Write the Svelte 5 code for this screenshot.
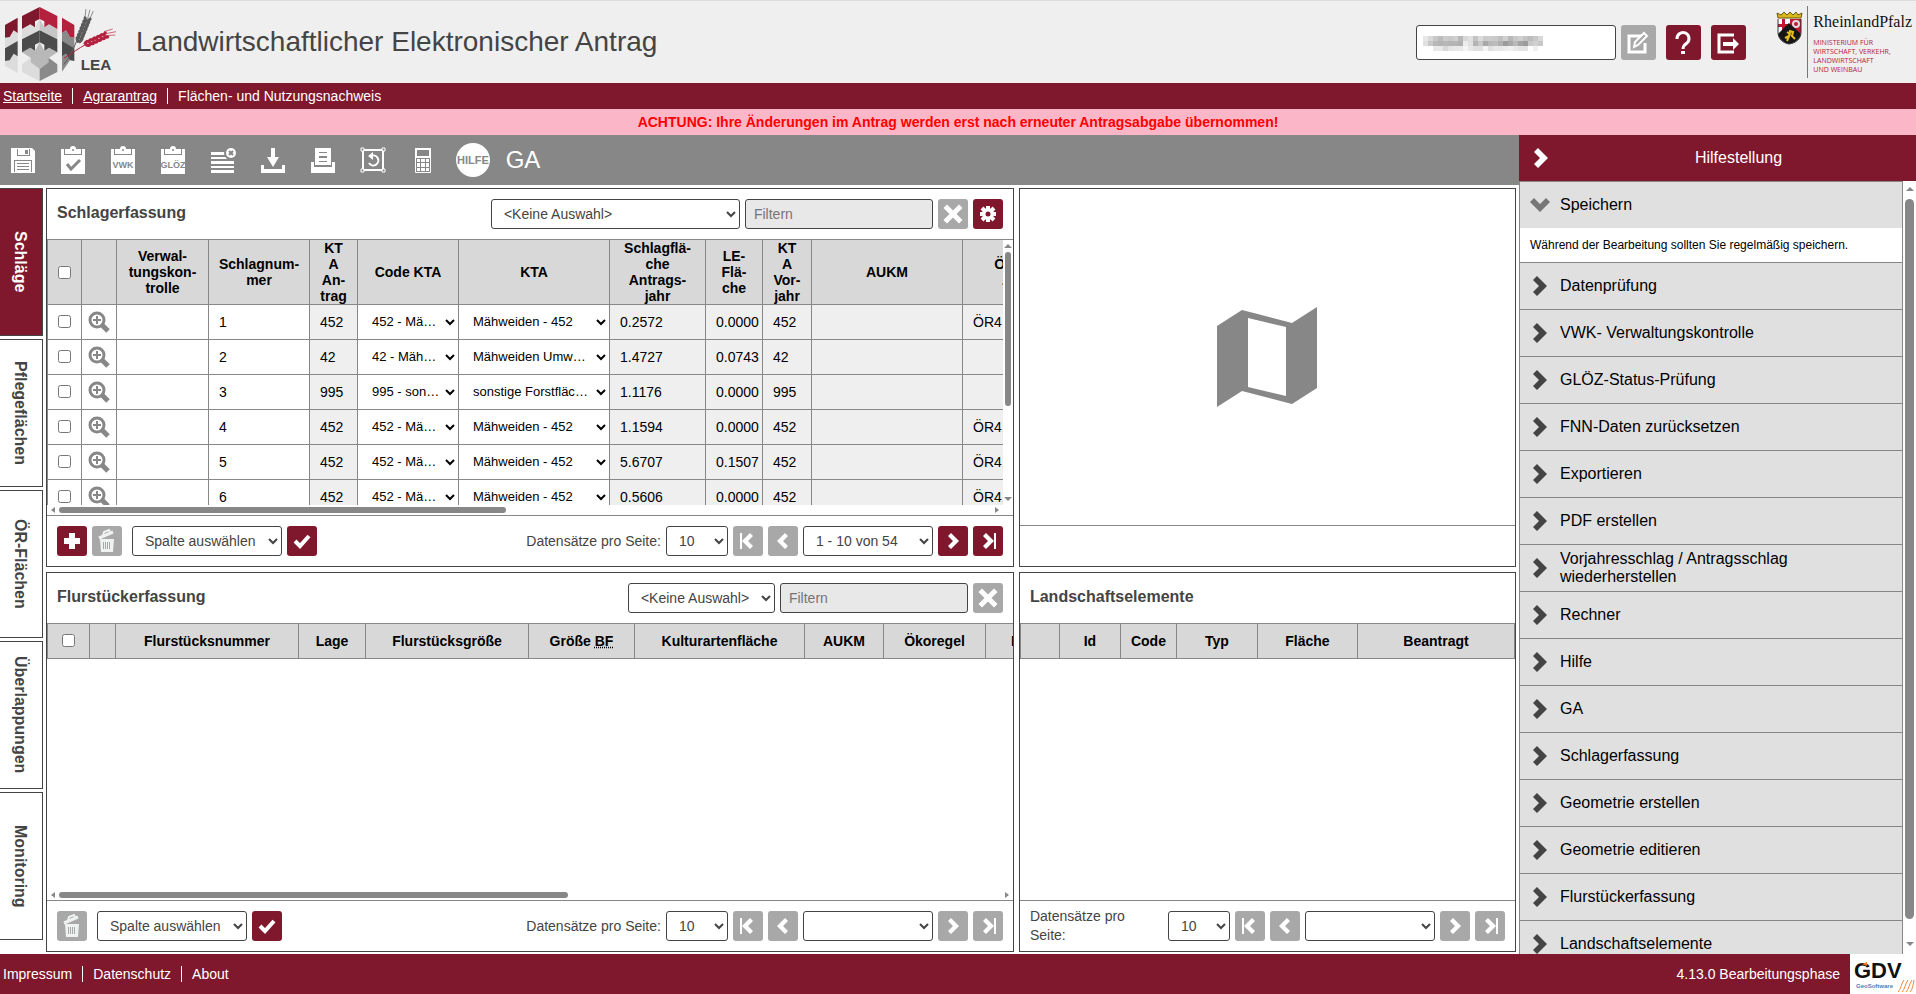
<script>
  const tools = [
    { icon: 'save', title: 'Speichern' },
    { icon: 'clip-check', title: 'Datenprüfung' },
    { icon: 'clip-vwk', title: 'VWK' },
    { icon: 'clip-gloez', title: 'GLÖZ' },
    { icon: 'reset', title: 'FNN-Daten zurücksetzen' },
    { icon: 'download', title: 'Exportieren' },
    { icon: 'print', title: 'PDF erstellen' },
    { icon: 'restore', title: 'Wiederherstellen' },
    { icon: 'calc', title: 'Rechner' },
  ];

  const tabs = ['Schläge', 'Pflegeflächen', 'ÖR-Flächen', 'Überlappungen', 'Monitoring'];
  let activeTab = $state('Schläge');

  const schlagCols = [
    { label: '', width: 34, check: true },
    { label: '', width: 35 },
    { label: 'Verwal-\ntungskon-\ntrolle', width: 92 },
    { label: 'Schlagnum-\nmer', width: 101 },
    { label: 'KT\nA\nAn-\ntrag', width: 48 },
    { label: 'Code KTA', width: 101 },
    { label: 'KTA', width: 151 },
    { label: 'Schlagflä-\nche\nAntrags-\njahr', width: 96 },
    { label: 'LE-\nFlä-\nche', width: 57 },
    { label: 'KT\nA\nVor-\njahr', width: 49 },
    { label: 'AUKM', width: 151 },
    { label: 'Ökoregel\nAntrag', width: 124 },
  ];
  const schlagWidth = schlagCols.reduce((sum, c) => sum + c.width, 1);

  const schlaege = [
    { nr: 1, kta: '452', code: '452 - Mähweiden', name: 'Mähweiden - 452', area: '0.2572', le: '0.0000', oer: 'ÖR4' },
    { nr: 2, kta: '42', code: '42 - Mähweiden Umwandlung', name: 'Mähweiden Umwandlung - 42', area: '1.4727', le: '0.0743', oer: '' },
    { nr: 3, kta: '995', code: '995 - sonstige Forstflächen', name: 'sonstige Forstflächen - 995', area: '1.1176', le: '0.0000', oer: '' },
    { nr: 4, kta: '452', code: '452 - Mähweiden', name: 'Mähweiden - 452', area: '1.1594', le: '0.0000', oer: 'ÖR4,' },
    { nr: 5, kta: '452', code: '452 - Mähweiden', name: 'Mähweiden - 452', area: '5.6707', le: '0.1507', oer: 'ÖR4,' },
    { nr: 6, kta: '452', code: '452 - Mähweiden', name: 'Mähweiden - 452', area: '0.5606', le: '0.0000', oer: 'ÖR4,' },
  ];

  const flurCols = [
    { label: '', width: 42, check: true },
    { label: '', width: 26 },
    { label: 'Flurstücksnummer', width: 183 },
    { label: 'Lage', width: 67 },
    { label: 'Flurstücksgröße', width: 163 },
    { label: 'Größe', abbr: 'BF', width: 106 },
    { label: 'Kulturartenfläche', width: 170 },
    { label: 'AUKM', width: 79 },
    { label: 'Ökoregel', width: 102 },
    { label: 'Bindung', width: 108 },
  ];
  const flurWidth = flurCols.reduce((sum, c) => sum + c.width, 1);

  const leCols = [
    { label: '', width: 39 },
    { label: 'Id', width: 61 },
    { label: 'Code', width: 56 },
    { label: 'Typ', width: 81 },
    { label: 'Fläche', width: 100 },
    { label: 'Beantragt', width: 157 },
  ];

  const helpTopics = [
    'Datenprüfung',
    'VWK- Verwaltungskontrolle',
    'GLÖZ-Status-Prüfung',
    'FNN-Daten zurücksetzen',
    'Exportieren',
    'PDF erstellen',
    'Vorjahresschlag / Antragsschlag wiederherstellen',
    'Rechner',
    'Hilfe',
    'GA',
    'Schlagerfassung',
    'Geometrie erstellen',
    'Geometrie editieren',
    'Flurstückerfassung',
    'Landschaftselemente',
  ];

  // grey values of the masked user number, 5px blocks
  const mask = [
    'e8d8c8bcccc8d0b8d8e0c4dccccccac0d0b8c8d0c4bcc8d8',
    'e0c8b8b4b8b4b4b0ece0b4c8a8b8bcb09ca8b8a49cc8d0c8',
    'ffffe8e8d8e4e8e8f4e8e0e0f4e0e8e8ecf0e8e4e4fff0ff',
  ].map((row) => row.match(/../g));
</script>

{#snippet icon(name)}
  {#if name === 'save'}
    <svg width="26" height="28" viewBox="0 0 26 28" aria-hidden="true">
      <path fill="#fff" d="M1 2h21l3 3v22H1z" />
      <path fill="#878787" d="M7 3h13v7H7zM4 14h18v12H4z" />
      <path fill="#fff" d="M8 3h11v6H8zM5 15h16v11H5z" />
      <path fill="#878787" d="M15 4h3v4h-3zM7 17h12v1H7zM7 20h12v1H7zM7 23h12v1H7z" />
    </svg>
  {:else if name.startsWith('clip')}
    <svg width="26" height="28" viewBox="0 0 26 28" aria-hidden="true">
      <path fill="#fff" d="M1 3h24v25H1z" />
      <path fill="#878787" d="M4 3h18v6H4z" />
      <path fill="#fff" d="M5 3h5a3 3 0 0 1 6 0h5v5H5z" />
      <circle cx="13" cy="4" r="1" fill="#878787" />
      {#if name === 'clip-check'}
        <path d="M7 18l4 5 9-9" fill="none" stroke="#878787" stroke-width="3" />
      {:else}
        <text x="13" y="22" text-anchor="middle" font-size="9" font-weight="bold" fill="#878787">
          {name === 'clip-vwk' ? 'VWK' : 'GLÖZ'}
        </text>
      {/if}
    </svg>
  {:else if name === 'reset'}
    <svg width="26" height="28" viewBox="0 0 26 28" aria-hidden="true">
      <path fill="#fff" d="M1 6h15v3H1zM1 11h16v2H1zM1 15h23v3H1zM1 20h23v2H1zM1 24h23v3H1z" />
      <circle cx="21" cy="7" r="7" fill="#878787" />
      <circle cx="21" cy="7" r="5" fill="#fff" />
      <path d="M19 5l4 4M23 5l-4 4" stroke="#878787" stroke-width="2" />
    </svg>
  {:else if name === 'download'}
    <svg width="26" height="28" viewBox="0 0 26 28" aria-hidden="true">
      <path fill="#fff" d="M11 2h4v9h4l-6 10-6-10h4zM1 19h3v4h18v-4h3v8H1z" />
    </svg>
  {:else if name === 'print'}
    <svg width="26" height="28" viewBox="0 0 26 28" aria-hidden="true">
      <path fill="#fff" d="M5 2h16v17H5zM1 16h3v5h18v-5h3v11H1z" />
      <path fill="#878787" d="M9 6h8v1H9zM9 10h8v2H9zM9 15h8v1H9z" />
    </svg>
  {:else if name === 'restore'}
    <svg width="26" height="28" viewBox="0 0 26 28" aria-hidden="true">
      <path fill="none" stroke="#fff" stroke-width="2" d="M3 4h20v20H3z" />
      <path fill="#878787" stroke="#fff" d="M1 2h3v3H1zM22 2h3v3h-3zM1 23h3v3H1zM22 23h3v3h-3z" />
      <path fill="none" stroke="#fff" stroke-width="2" d="M9 17a5 5 0 1 0 2-7" />
      <path fill="#fff" d="M8 10l5-4v8z" />
    </svg>
  {:else if name === 'calc'}
    <svg width="26" height="28" viewBox="0 0 26 28" aria-hidden="true">
      <path fill="none" stroke="#fff" d="M5.500 2.500h15v24h-15z" />
      <path fill="none" stroke="#fff" stroke-width="2" d="M6 3h14v8H6z" />
      <path
        fill="#fff"
        d="M7 13h3v3H7zM11 13h4v3h-4zM16 13h3v3h-3zM7 17h3v4H7zM11 17h4v4h-4zM16 17h3v4h-3zM7 22h3v3H7zM11 22h4v3h-4zM16 22h3v3h-3z"
      />
    </svg>
  {:else if name === 'zoom'}
    <svg width="22" height="22" viewBox="0 0 22 22" aria-hidden="true">
      <path d="M13 13l7 7" stroke="#878787" stroke-width="5" />
      <circle cx="9" cy="9" r="7" fill="#fff" stroke="#878787" stroke-width="3" />
      <path d="M9 5v8M5 9h8" stroke="#878787" stroke-width="2" />
    </svg>
  {:else if name === 'plus'}
    <svg width="30" height="30" viewBox="0 0 30 30" aria-hidden="true">
      <path fill="#fff" d="M12 7h6v5h5v6h-5v5h-6v-5H7v-6h5z" />
    </svg>
  {:else if name === 'trash'}
    <svg width="30" height="30" viewBox="0 0 30 30" aria-hidden="true">
      <path fill="#eef2f1" d="M8 13h14l-1 13H9z" />
      <path fill="#a8a8a8" d="M11 16h1v7h-1zM13 16h1v7h-1zM15 16h1v7h-1zM17 16h1v7h-1z" />
      <path d="M7 12l14-6" stroke="#eef2f1" stroke-width="3" />
      <path d="M11 9l1-3 5-2 1 2" fill="none" stroke="#eef2f1" stroke-width="2" />
    </svg>
  {:else if name === 'check'}
    <svg width="30" height="30" viewBox="0 0 30 30" aria-hidden="true">
      <path d="M8 15l5 5 9-10" fill="none" stroke="#fff" stroke-width="4" />
    </svg>
  {:else if name === 'cross'}
    <svg width="30" height="30" viewBox="0 0 30 30" aria-hidden="true">
      <path d="M9 9l12 12M21 9L9 21" stroke="#fff" stroke-width="5" stroke-linecap="square" />
    </svg>
  {:else if name === 'gear'}
    <svg width="30" height="30" viewBox="0 0 30 30" aria-hidden="true">
      <path d="M15 7v16M7 15h16M9 9l12 12M21 9L9 21" stroke="#fff" stroke-width="4" />
      <circle cx="15" cy="15" r="6" fill="#fff" />
      <circle cx="15" cy="15" r="2.5" fill="#80182d" />
    </svg>
  {:else if name === 'first'}
    <svg width="30" height="30" viewBox="0 0 30 30" aria-hidden="true">
      <path fill="#fff" d="M7 7h2v16H7zM20 10l-3-3-8 8 8 8 3-3-5-5z" />
    </svg>
  {:else if name === 'prev'}
    <svg width="30" height="30" viewBox="0 0 30 30" aria-hidden="true">
      <path fill="#fff" d="M20 10l-3-3-8 8 8 8 3-3-5-5z" />
    </svg>
  {:else if name === 'next'}
    <svg width="30" height="30" viewBox="0 0 30 30" aria-hidden="true">
      <path fill="#fff" d="M10 10l3-3 8 8-8 8-3-3 5-5z" />
    </svg>
  {:else if name === 'last'}
    <svg width="30" height="30" viewBox="0 0 30 30" aria-hidden="true">
      <path fill="#fff" d="M21 7h2v16h-2zM10 10l3-3 8 8-8 8-3-3 5-5z" />
    </svg>
  {:else if name === 'edit'}
    <svg width="35" height="35" viewBox="0 0 35 35" aria-hidden="true">
      <path d="M20 11H8v16h16v-9" fill="none" stroke="#fff" stroke-width="3" />
      <path d="M13 22l1-5L23 8l3 3-9 9z" fill="#a8a8a8" stroke="#fff" stroke-width="2" />
    </svg>
  {:else if name === 'help'}
    <svg width="35" height="35" viewBox="0 0 35 35" aria-hidden="true">
      <path d="M11 14a6 6 0 1 1 10 4c-3 2-4 3-4 6" fill="none" stroke="#fff" stroke-width="3" />
      <path fill="#fff" d="M15 26h4v3h-4z" />
    </svg>
  {:else if name === 'logout'}
    <svg width="35" height="35" viewBox="0 0 35 35" aria-hidden="true">
      <path d="M23 10H8v17h15" fill="none" stroke="#fff" stroke-width="3" />
      <path fill="#fff" d="M12 17h10v-4l6 6-6 6v-4H12z" />
    </svg>
  {:else if name === 'chevron'}
    <svg width="14" height="20" viewBox="0 0 14 20" aria-hidden="true">
      <path fill="currentColor" d="M0 4l4-4 10 10L4 20l-4-4 6-6z" />
    </svg>
  {:else if name === 'chevron-down'}
    <svg width="20" height="14" viewBox="0 0 20 14" aria-hidden="true">
      <path fill="currentColor" d="M4 0L0 4l10 10L20 4l-4-4-6 6z" />
    </svg>
  {/if}
{/snippet}

{#snippet iconButton(name, title, active)}
  <button class="icon-btn" class:icon-btn--active={active} {title} aria-label={title}>
    {@render icon(name)}
  </button>
{/snippet}

{#snippet hbar(size)}
  <div class="bar bar--h" aria-hidden="true">
    <svg width="4" height="6" viewBox="0 0 4 6"><path d="M4 0v6L0 3z" /></svg>
    <div class="track"><div class="thumb" style="width: {size}%"></div></div>
    <svg width="4" height="6" viewBox="0 0 4 6"><path d="M0 0v6l4-3z" /></svg>
  </div>
{/snippet}

{#snippet vbar(size)}
  <div class="bar bar--v" aria-hidden="true">
    <svg width="8" height="4" viewBox="0 0 8 4"><path d="M0 4h8L4 0z" /></svg>
    <div class="track"><div class="thumb" style="height: {size}%"></div></div>
    <svg width="8" height="4" viewBox="0 0 8 4"><path d="M0 0h8L4 4z" /></svg>
  </div>
{/snippet}

{#snippet pager(id, range, active)}
  <label class="pager-label" for="{id}-size">Datensätze pro Seite:</label>
  <select class="field size-select" id="{id}-size">
    <option>10</option>
    <option>25</option>
  </select>
  {@render iconButton('first', 'Erste Seite', false)}
  {@render iconButton('prev', 'Vorherige Seite', false)}
  <select class="field range-select" aria-label="Seite">
    <option>{range}</option>
  </select>
  {@render iconButton('next', 'Nächste Seite', active)}
  {@render iconButton('last', 'Letzte Seite', active)}
{/snippet}

{#snippet headCells(cols)}
  <tr>
    {#each cols as col}
      <th>
        {#if col.check}
          <input type="checkbox" aria-label="Alle auswählen" />
        {:else}
          {col.label}{#if col.abbr}{' '}<abbr title="Bruttofläche">{col.abbr}</abbr>{/if}
        {/if}
      </th>
    {/each}
  </tr>
{/snippet}

<!-- one storey of the logo cube: two side wings and the roof in the middle -->
{#snippet storey(left, right)}
  <path fill={left} d="M15 72l38-22v46l-12-8-12 20-14 2zM66 45l53-27v36l-14 7v18l-14-9-25 14z" />
  <path fill={right} d="M223 72l-37-22v46l12-8 12 20 13 2zM172 45l-53-27v36l14 7v18l14-9 25 14z" />
{/snippet}

<div class="app">
  <header class="header">
    <svg class="logo" width="118" height="82" viewBox="0 0 354 246" aria-label="LEA">
      <path fill="#dcdcdc" d="M15 110l14-2 12-20 12 8v26l-38 20zM66 84l25-14 14 9 14-25v34l-53 27z" />
      <path fill="#c6c6c6" d="M172 84l-25-14-14 9-14-25v34l53 27z" />
      <path fill="#8a8a8a" d="M223 110l-13-2-12-20-12 8v26l37 20z" />
      <path fill="#dcdcdc" d="M15 180l14-2 12-20 12 8v49l-38-20zM66 190l26-20v14l27 20v36l-53-27z" />
      <path fill="#b8b8b8" d="M66 154l25-14 14 9 14-25 14 25 14-9 25 14-25 16v14l-28 20-27-20v-14z" />
      <path fill="#8a8a8a" d="M172 190l-26-20v14l-27 20v36l53-27zM186 166l12-8 12 20-24 34z" />
      {@render storey('#80182d', '#b4213f')}
      <g transform="translate(0 70)">{@render storey('#4b4b4b', '#4b4b4b')}</g>
      <g fill="none" stroke="#5a5a5a" stroke-width="3">
        <path d="M192 190c16-20 30-50 42-80" />
        <path stroke="#b4213f" d="M192 172c24-16 44-30 66-42" />
      </g>
      <g fill="#5a5a5a">
        {#each [0, 1, 2, 3, 4, 5, 6] as i}
          <ellipse cx={232 + i * 4} cy={116 - i * 10} rx="5" ry="10" transform="rotate(-8 {232 + i * 4} {116 - i * 10})" />
          <ellipse cx={243 + i * 4} cy={118 - i * 10} rx="5" ry="10" transform="rotate(38 {243 + i * 4} {118 - i * 10})" />
        {/each}
      </g>
      <path d="M254 56l4-32M262 56l8-30M266 62l14-32" stroke="#5a5a5a" stroke-width="2" />
      <g fill="#b4213f">
        {#each [0, 1, 2, 3, 4, 5] as i}
          <ellipse cx={258 + i * 11} cy={124 - i * 5} rx="9" ry="5" transform="rotate(-50 {258 + i * 11} {124 - i * 5})" />
          <ellipse cx={264 + i * 11} cy={133 - i * 5} rx="9" ry="5" transform="rotate(5 {264 + i * 11} {133 - i * 5})" />
        {/each}
      </g>
      <path d="M318 98l30-6M318 104l28-2M312 92l26-8" stroke="#b4213f" stroke-width="2" />
      <text x="242" y="207" font-size="46" font-weight="bold" fill="#444">LEA</text>
    </svg>
    <h1>Landwirtschaftlicher Elektronischer Antrag</h1>
    <div class="user">
      <input type="text" aria-label="Unternehmensnummer" />
      <svg class="mask" width="120" height="15" viewBox="0 0 120 15" aria-hidden="true">
        {#each mask as row, y}
          {#each row as tone, x}
            <rect x={x * 5} y={y * 5} width="5" height="5" fill="#{tone}{tone}{tone}" />
          {/each}
        {/each}
      </svg>
      <button class="icon-btn icon-btn--big" aria-label="Bearbeiten">{@render icon('edit')}</button>
    </div>
    <button class="icon-btn icon-btn--big icon-btn--active" aria-label="Hilfe">{@render icon('help')}</button>
    <button class="icon-btn icon-btn--big icon-btn--active" aria-label="Abmelden">{@render icon('logout')}</button>
    <div class="ministry">
      <svg width="27" height="34" viewBox="0 0 27 34" aria-hidden="true">
        <path fill="#d8b71a" stroke="#6b5a10" d="M2 7L1 2l4 2 3-3 3 3 3-3 3 3 3-3 2 3 4-2-1 5z" />
        <path fill="#fff" d="M2 8h12v14H2z" />
        <path fill="#c01733" d="M6 8h3v14H6zM2 13h12v3H2zM14 8h11v14H14z" />
        <circle cx="20" cy="13" r="3" fill="none" stroke="#ddd" stroke-width="2" />
        <path fill="#161616" d="M13 12l12 11c-1 5-6 9-12 10C8 32 3 28 2 23z" />
        <path d="M9 27l4-2 1-5 3 1-1 4 3 3M11 21l3 2-3 7" fill="none" stroke="#e2bd20" stroke-width="2" />
        <path d="M2 8v13c0 7 5 11 11 12 7-1 12-5 12-12V8" fill="none" stroke="#333" />
      </svg>
      <div class="ministry-text">
        <div class="land">RheinlandPfalz</div>
        <div class="dept">MINISTERIUM FÜR<br />WIRTSCHAFT, VERKEHR,<br />LANDWIRTSCHAFT<br />UND WEINBAU</div>
      </div>
    </div>
  </header>

  <nav class="crumbs">
    <a href="#start">Startseite</a>
    <a href="#antrag">Agrarantrag</a>
    <span>Flächen- und Nutzungsnachweis</span>
  </nav>

  <div class="warning">ACHTUNG: Ihre Änderungen im Antrag werden erst nach erneuter Antragsabgabe übernommen!</div>

  <div class="body">
    <div class="work">
      <div class="toolbar">
        {#each tools as tool}
          <button title={tool.title} aria-label={tool.title}>{@render icon(tool.icon)}</button>
        {/each}
        <button title="Hilfe"><span class="hilfe">HILFE</span></button>
        <button class="ga">GA</button>
      </div>

      <div class="content">
        <div class="tabs" role="tablist">
          {#each tabs as tab}
            <button
              role="tab"
              class="tab"
              class:tab--active={tab === activeTab}
              aria-selected={tab === activeTab}
              onclick={() => (activeTab = tab)}
            >
              {tab}
            </button>
          {/each}
        </div>

        <div class="panels">
          <section class="panel">
            <div class="panel-head">
              <h2>Schlagerfassung</h2>
              <select class="field preset-wide" aria-label="Filtervorlage">
                <option>&lt;Keine Auswahl&gt;</option>
              </select>
              <input class="field filter" type="text" placeholder="Filtern" aria-label="Schläge filtern" />
              {@render iconButton('cross', 'Filter löschen', false)}
              {@render iconButton('gear', 'Einstellungen', true)}
            </div>
            <div class="grid-area">
              <div class="scroll">
                <table style="width: {schlagWidth}px">
                  <colgroup>
                    {#each schlagCols as col}<col style="width: {col.width}px" />{/each}
                  </colgroup>
                  <thead class="tall">{@render headCells(schlagCols)}</thead>
                  <tbody>
                    {#each schlaege as s}
                      <tr>
                        <td class="center"><input type="checkbox" aria-label="Schlag {s.nr} auswählen" /></td>
                        <td class="center">
                          <button class="zoom-btn" aria-label="Zu Schlag {s.nr} zoomen">{@render icon('zoom')}</button>
                        </td>
                        <td></td>
                        <td>{s.nr}</td>
                        <td class="ro">{s.kta}</td>
                        <td class="edit"><select aria-label="Code KTA"><option>{s.code}</option></select></td>
                        <td class="edit edit--name"><select aria-label="KTA"><option>{s.name}</option></select></td>
                        <td class="ro">{s.area}</td>
                        <td class="ro">{s.le}</td>
                        <td class="ro">{s.kta}</td>
                        <td class="ro"></td>
                        <td class="ro">{s.oer}</td>
                      </tr>
                    {/each}
                  </tbody>
                </table>
              </div>
              {@render vbar(64)}
            </div>
            <div class="bar-row bar-row--inset">{@render hbar(48)}</div>
            <div class="panel-foot">
              {@render iconButton('plus', 'Schlag anlegen', true)}
              {@render iconButton('trash', 'Schlag löschen', false)}
              <select class="field column-select" aria-label="Spalte">
                <option>Spalte auswählen</option>
              </select>
              {@render iconButton('check', 'Übernehmen', true)}
              <span class="spacer"></span>
              {@render pager('schlag', '1 - 10 von 54', true)}
            </div>
          </section>

          <section class="panel">
            <div class="map">
              <svg width="100" height="100" viewBox="0 0 100 100" role="img" aria-label="Karte">
                <path
                  fill="#878787"
                  fill-rule="evenodd"
                  d="M0 19L25 3l50 13L100 0v81L75 97 25 84 0 100zM31 11v69l38 9V20z"
                />
              </svg>
            </div>
            <div class="map-foot"></div>
          </section>

          <section class="panel">
            <div class="panel-head">
              <h2>Flurstückerfassung</h2>
              <select class="field preset" aria-label="Filtervorlage">
                <option>&lt;Keine Auswahl&gt;</option>
              </select>
              <input class="field filter" type="text" placeholder="Filtern" aria-label="Flurstücke filtern" />
              {@render iconButton('cross', 'Filter löschen', false)}
            </div>
            <div class="grid-area">
              <div class="scroll">
                <table style="width: {flurWidth}px">
                  <colgroup>
                    {#each flurCols as col}<col style="width: {col.width}px" />{/each}
                  </colgroup>
                  <thead>{@render headCells(flurCols)}</thead>
                </table>
              </div>
            </div>
            <div class="bar-row">{@render hbar(54)}</div>
            <div class="panel-foot">
              {@render iconButton('trash', 'Flurstück löschen', false)}
              <select class="field column-select" aria-label="Spalte">
                <option>Spalte auswählen</option>
              </select>
              {@render iconButton('check', 'Übernehmen', true)}
              <span class="spacer"></span>
              {@render pager('flur', '', false)}
            </div>
          </section>

          <section class="panel">
            <div class="panel-head">
              <h2>Landschaftselemente</h2>
            </div>
            <div class="grid-area">
              <div class="scroll">
                <table class="fluid">
                  <colgroup>
                    {#each leCols as col}<col style="width: {(col.width / 494) * 100}%" />{/each}
                  </colgroup>
                  <thead>{@render headCells(leCols)}</thead>
                </table>
              </div>
            </div>
            <div class="panel-foot panel-foot--narrow">
              {@render pager('le', '', false)}
            </div>
          </section>
        </div>
      </div>
    </div>

    <aside class="help">
      <button class="help-head">
        <span class="help-icon">{@render icon('chevron')}</span>
        <span class="help-title">Hilfestellung</span>
      </button>
      <div class="help-body">
        <div class="help-list">
          <button class="topic topic--open">
            <span class="help-icon">{@render icon('chevron-down')}</span>
            Speichern
          </button>
          <p>Während der Bearbeitung sollten Sie regelmäßig speichern.</p>
          {#each helpTopics as topic}
            <button class="topic">
              <span class="help-icon">{@render icon('chevron')}</span>
              {topic}
            </button>
          {/each}
        </div>
        {@render vbar(98)}
      </div>
    </aside>
  </div>

  <footer class="footer">
    <a href="#impressum">Impressum</a>
    <a href="#datenschutz">Datenschutz</a>
    <a href="#about">About</a>
    <span class="version">4.13.0 Bearbeitungsphase</span>
    <svg class="gdv" width="66" height="40" viewBox="0 0 66 40" aria-label="GDV GeoSoftware">
      <path fill="#fff" d="M0 0h66v40H0z" />
      <text x="4" y="24" font-size="22" font-weight="bold" fill="#111">GDV</text>
      <path fill="#e87722" d="M12 10l5-2v4z" />
      <text x="6" y="34" font-size="6" font-weight="bold" fill="#4a80b5">GeoSoftware</text>
      <path d="M48 38c3-3 3-8 6-12M52 38c3-3 3-8 6-12M56 38c3-3 3-8 6-12M60 38c3-3 3-8 4-12" fill="none" stroke="#f0883a" />
    </svg>
  </footer>
</div>

<style>
  :global(body) {
    font-family: 'Liberation Sans', Arial, sans-serif;
    font-size: 14px;
    color: #444;
    background: #fff;
  }

  * {
    box-sizing: border-box;
  }

  button,
  select,
  input {
    font-family: inherit;
    font-size: inherit;
    margin: 0;
  }

  button {
    border: 0;
    padding: 0;
    cursor: pointer;
  }

  svg {
    display: block;
    flex-shrink: 0;
  }

  .app {
    height: 100vh;
    display: flex;
    flex-direction: column;
    overflow: hidden;
  }

  /* header */
  .header {
    display: flex;
    align-items: center;
    gap: 10px;
    height: 83px;
    flex-shrink: 0;
    background: #efefef;
    border-top: 1px solid #ddd;
  }

  h1 {
    flex: 1;
    margin: 0 0 0 8px;
    font-size: 28px;
    line-height: 32px;
    font-weight: normal;
    white-space: nowrap;
  }

  .user {
    position: relative;
    display: flex;
    gap: 5px;
  }

  .user input {
    width: 200px;
    height: 35px;
    border: 1px solid #444;
    border-radius: 3px;
    background: #fff;
    padding: 0 8px;
  }

  .mask {
    position: absolute;
    left: 7px;
    top: 11px;
  }

  .ministry {
    display: flex;
    align-self: stretch;
    margin-left: 20px;
    padding: 5px 4px 5px 0;
  }

  .ministry > svg {
    margin-top: 5px;
  }

  .ministry-text {
    margin-left: 4px;
    padding-left: 5px;
    border-left: 1px solid #777;
  }

  .land {
    font-family: 'Liberation Serif', 'Times New Roman', serif;
    font-size: 16px;
    line-height: 32px;
    color: #111;
  }

  .dept {
    font-family: 'Open Sans', sans-serif;
    font-size: 7px;
    line-height: 9px;
    color: #b4213f;
  }

  .crumbs,
  .footer {
    display: flex;
    align-items: center;
    flex-shrink: 0;
    background: #80182d;
    color: #fff;
    line-height: 16px;
    padding-left: 3px;
  }

  .crumbs {
    height: 26px;
  }

  .crumbs a,
  .footer a {
    color: #fff;
  }

  .crumbs > * + *,
  .footer a + a {
    margin-left: 10px;
    padding-left: 10px;
    border-left: 1px solid #fff;
  }

  .warning {
    flex-shrink: 0;
    background: #fbb6c7;
    color: #f00;
    font-weight: bold;
    text-align: center;
    line-height: 26px;
  }

  .body {
    flex: 1;
    min-height: 0;
    display: flex;
  }

  .work {
    flex: 1;
    min-width: 0;
    display: flex;
    flex-direction: column;
  }

  .toolbar {
    display: flex;
    align-items: center;
    gap: 4px;
    height: 50px;
    flex-shrink: 0;
    background: #878787;
  }

  .toolbar button {
    display: flex;
    align-items: center;
    justify-content: center;
    width: 46px;
    height: 50px;
    background: none;
    color: #fff;
  }

  .hilfe {
    width: 34px;
    border-radius: 50%;
    background: #fff;
    color: #878787;
    font-size: 11px;
    font-weight: bold;
    line-height: 34px;
  }

  .toolbar .ga {
    font-size: 24px;
  }

  .content {
    flex: 1;
    min-height: 0;
    display: flex;
    gap: 3px;
    padding: 3px 3px 2px 0;
  }

  .tabs {
    display: flex;
    flex-direction: column;
    gap: 3px;
    width: 43px;
    margin-bottom: 12px;
  }

  .tab {
    flex: 1;
    writing-mode: vertical-rl;
    display: flex;
    align-items: center;
    justify-content: center;
    padding-right: 2px;
    border: 1px solid #444;
    border-left: 0;
    background: #fff;
    color: #444;
    font-size: 16px;
    font-weight: bold;
  }

  .tab--active {
    background: #80182d;
    color: #fff;
  }

  .panels {
    flex: 1;
    min-width: 0;
    display: grid;
    grid-template-columns: minmax(0, 37fr) minmax(0, 19fr);
    grid-template-rows: minmax(0, 379fr) minmax(0, 380fr);
    gap: 5px;
  }

  .panel {
    display: flex;
    flex-direction: column;
    min-height: 0;
    border: 1px solid #444;
    background: #fff;
  }

  .panel-head,
  .panel-foot {
    display: flex;
    align-items: center;
    gap: 5px;
    height: 50px;
    flex-shrink: 0;
    padding: 0 10px;
  }

  .panel-foot {
    height: 51px;
    border-top: 1px solid #878787;
  }

  h2 {
    flex: 1;
    margin: 0;
    padding-bottom: 2px;
    font-size: 16px;
    line-height: 20px;
  }

  .spacer {
    flex: 1;
  }

  .field {
    height: 30px;
    border: 1px solid #444;
    border-radius: 3px;
    background: #fff;
    color: #444;
    padding: 0 0 0 8px;
  }

  .filter {
    width: 188px;
    background: #e8e8e8;
  }

  .filter::placeholder {
    color: #757575;
  }

  .preset-wide { width: 249px; }
  .preset { width: 147px; }
  .column-select { width: 150px; margin-left: 5px; }
  .size-select { width: 62px; }
  .range-select { width: 130px; }

  .pager-label {
    line-height: 19px;
  }

  .panel-foot--narrow .pager-label {
    max-width: 120px;
    margin-right: auto;
  }

  .icon-btn {
    display: flex;
    align-items: center;
    justify-content: center;
    flex-shrink: 0;
    width: 30px;
    height: 30px;
    border-radius: 3px;
    background: #a8a8a8;
  }

  .icon-btn--big {
    width: 35px;
    height: 35px;
  }

  .icon-btn--active {
    background: #80182d;
  }

  .grid-area {
    flex: 1;
    min-height: 0;
    display: flex;
    border-top: 1px solid #878787;
  }

  .scroll {
    flex: 1;
    min-width: 0;
    overflow: auto;
    scrollbar-width: none;
  }

  table {
    table-layout: fixed;
    border-collapse: separate;
    border-spacing: 0;
    border-left: 1px solid #878787;
    color: #000;
  }

  .fluid {
    width: 100%;
  }

  th,
  td {
    height: 35px;
    padding: 0 0 1px;
    border-right: 1px solid #878787;
    border-bottom: 1px solid #878787;
    line-height: 16px;
    white-space: nowrap;
  }

  th {
    background: #d8d8d8;
    white-space: pre-line;
  }

  .tall :global(th) {
    height: 65px;
    padding: 0;
  }

  td {
    padding-left: 10px;
  }

  .center {
    padding: 0 0 1px;
    text-align: center;
  }

  .edit {
    padding: 0 0 1px 10px;
  }

  .ro {
    background: #efefef;
  }

  input[type='checkbox'] {
    display: block;
    width: 13px;
    height: 13px;
    margin: 0 auto;
  }

  .edit select {
    width: 100%;
    height: 30px;
    border: 0;
    padding: 0;
    background: none;
    color: #000;
    font-size: 13px;
    text-overflow: ellipsis;
  }

  .edit--name select {
    padding-right: 3px;
  }

  .zoom-btn {
    display: block;
    margin: 0 auto;
    background: none;
  }

  /* scroll bars */
  .bar {
    display: flex;
    align-items: center;
    justify-content: space-between;
    fill: #878787;
  }

  .bar--h {
    width: 100%;
    height: 10px;
    padding: 0 4px;
    gap: 4px;
  }

  .bar--v {
    flex-direction: column;
    width: 10px;
    padding: 4px 0;
    gap: 4px;
  }

  .track {
    flex: 1;
  }

  .thumb {
    border-radius: 5px;
    background: #878787;
  }

  .bar--h .thumb {
    height: 6px;
  }

  .bar--v .thumb {
    width: 6px;
  }

  .bar-row {
    flex-shrink: 0;
  }

  .bar-row--inset {
    padding-right: 10px;
  }

  .map {
    flex: 1;
    display: flex;
    align-items: center;
    justify-content: center;
  }

  .map-foot {
    height: 41px;
    border-top: 1px solid #878787;
  }

  /* help */
  .help {
    width: 397px;
    flex-shrink: 0;
    display: flex;
    flex-direction: column;
    font-size: 16px;
    line-height: 18px;
  }

  .help-head {
    display: flex;
    align-items: center;
    height: 46px;
    flex-shrink: 0;
    padding-left: 2px;
    background: #80182d;
    color: #fff;
    font-size: 16px;
  }

  .help-title {
    flex: 1;
  }

  .help-icon {
    display: flex;
    justify-content: center;
    width: 40px;
    flex-shrink: 0;
  }

  .help-body {
    flex: 1;
    min-height: 0;
    display: flex;
  }

  .help-list {
    flex: 1;
    overflow: auto;
    scrollbar-width: none;
    border: 1px solid #878787;
    border-width: 1px 1px 0 1px;
  }

  .topic {
    display: flex;
    align-items: center;
    width: 100%;
    height: 47px;
    padding-right: 10px;
    border-bottom: 1px solid #878787;
    background: #e0e0e0;
    color: #000;
    font-size: 16px;
    line-height: 18px;
    text-align: left;
  }

  .topic .help-icon {
    color: #444;
  }

  .topic--open {
    height: 46px;
    border-bottom: 0;
  }

  .topic--open .help-icon {
    color: #777;
  }

  .help-list p {
    margin: 0;
    padding: 0 10px;
    border-bottom: 1px solid #878787;
    background: #fff;
    color: #000;
    font-size: 12px;
    line-height: 34px;
  }

  .help .bar--v {
    width: 13px;
    padding: 6px 0 8px;
    gap: 8px;
  }

  .help .bar--v .thumb {
    width: 9px;
  }

  /* footer */
  .footer {
    height: 40px;
  }

  .footer a {
    text-decoration: none;
  }

  .version {
    margin-left: auto;
    margin-right: 10px;
  }
</style>
